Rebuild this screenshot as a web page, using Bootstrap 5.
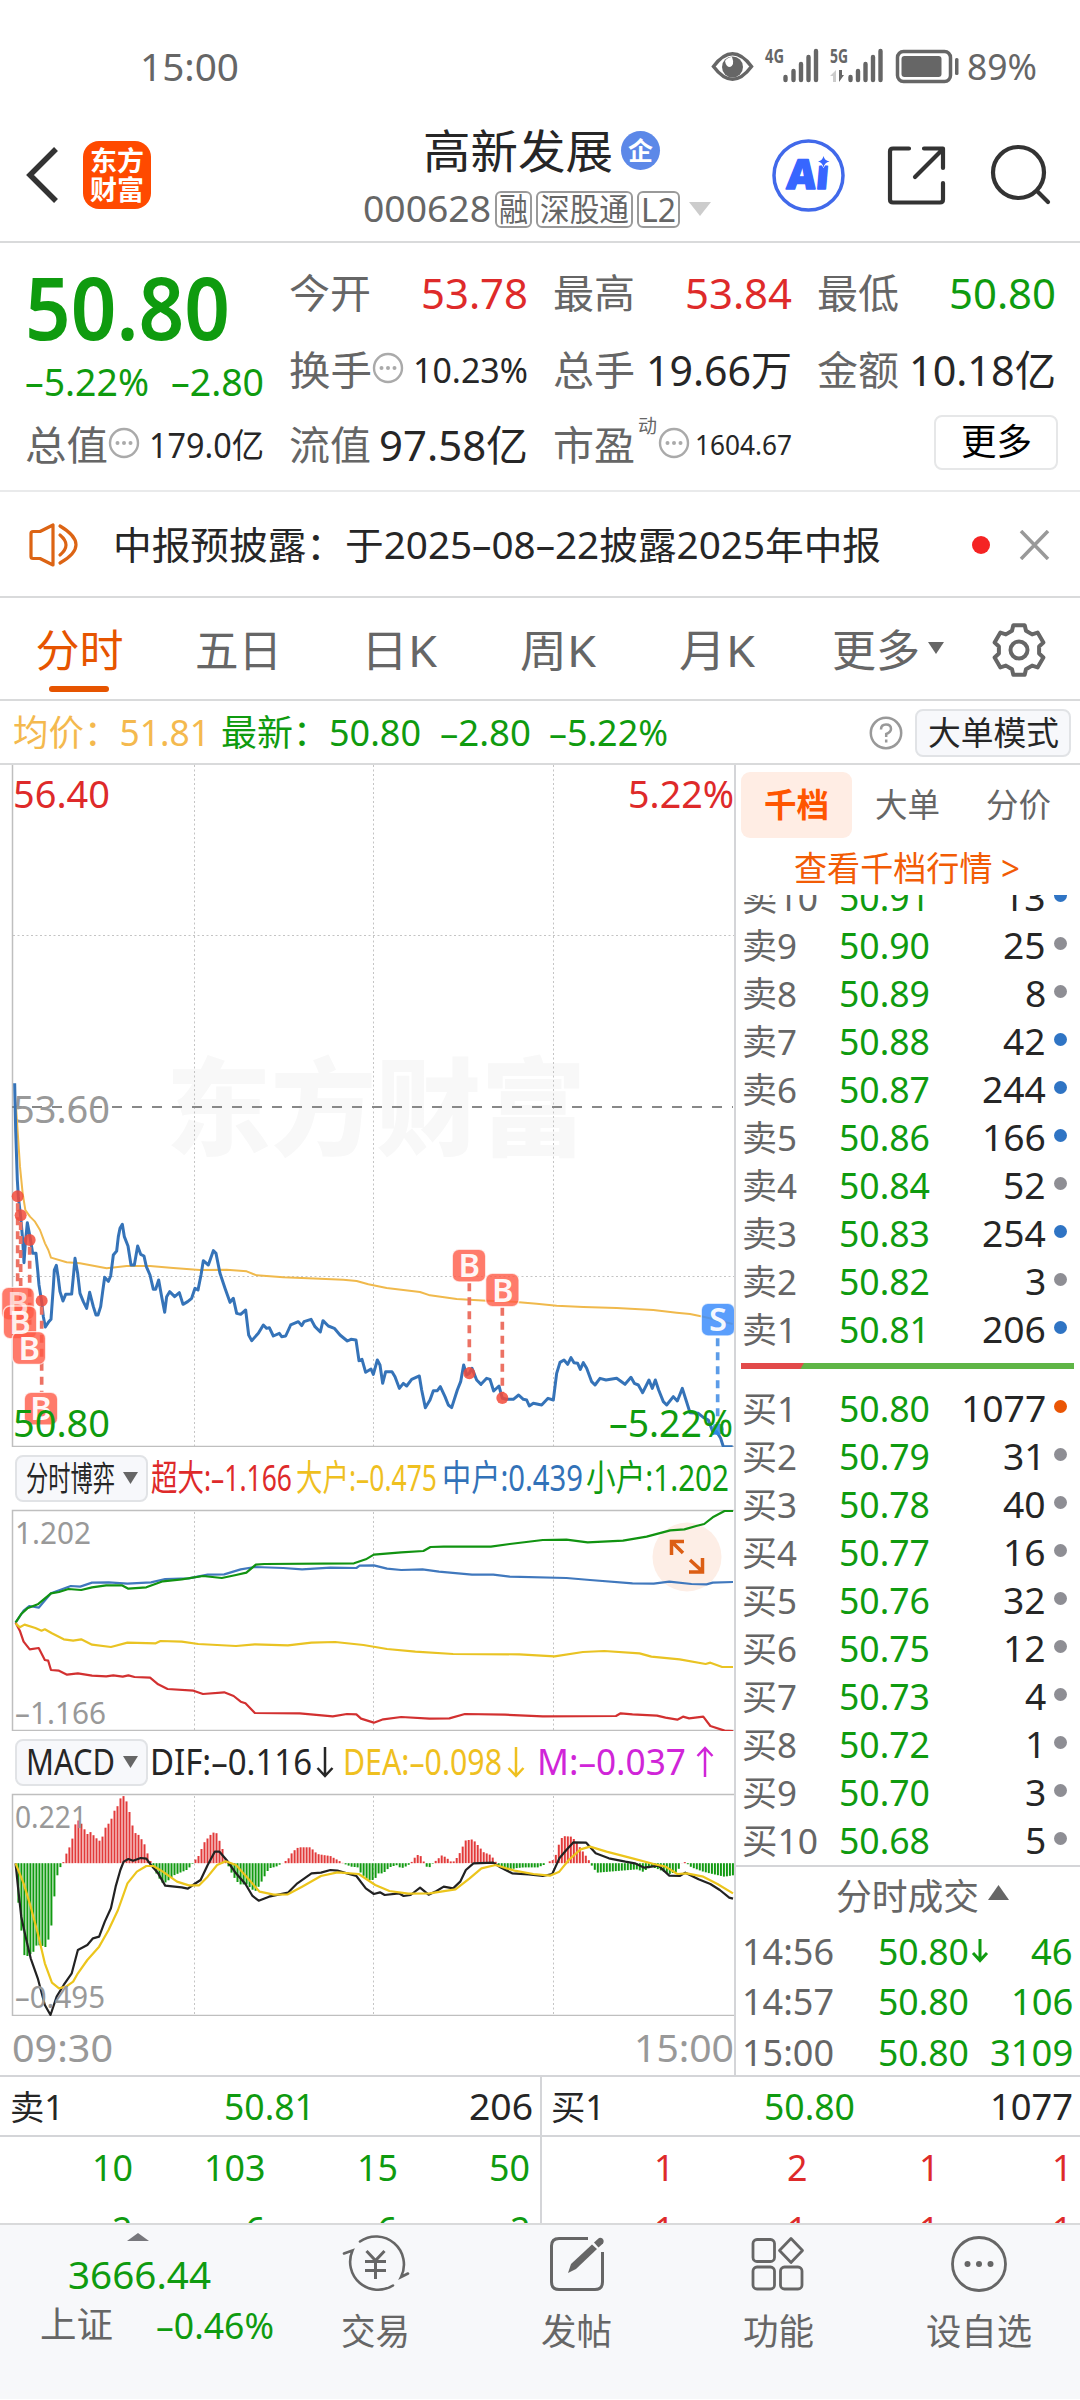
<!DOCTYPE html>
<html lang="zh-CN">
<head>
<meta charset="utf-8">
<meta name="viewport" content="width=device-width, initial-scale=1">
<title>高新发展 000628</title>
<link rel="stylesheet" href="https://cdn.jsdelivr.net/npm/bootstrap@5.3.0/dist/css/bootstrap.min.css">
<style>
body{width:1080px;height:2400px;overflow:hidden;background:#fff;color:#262626;font-family:"Noto Sans","Noto Sans CJK SC",sans-serif;line-height:1.2}
svg{display:block;flex:none}
svg text{font-family:"Noto Sans","Noto Sans CJK SC",sans-serif}
.fit{display:inline-block;white-space:nowrap;flex:none}
.fit>span{display:inline-block;transform-origin:0 50%}
.colon{font-family:"Noto Sans CJK TC",sans-serif;line-height:1}
.c-g{color:#0f9b0f}.c-r{color:#de2a2a}.c-y{color:#efc01f}.c-b{color:#3272b8}.c-m{color:#d025d8}
.c-gray{color:#666}.c-avg{color:#f4b94e}.c-o{color:#f25c05}
.f28{font-size:28px}.f33{font-size:33px}.f34{font-size:34px}.f36{font-size:36px}.f38{font-size:38px}.f40{font-size:40px}.f42{font-size:42px}.f44{font-size:44px}
.status{height:105px;padding:28px 43px 0 140px}
.topbar{height:138px;border-bottom:2px solid #d9dadb;padding:4px 29px 0 25px}
.logo{width:68px;height:68px;border-radius:16px;background:#ff4a00;color:#fff;font-size:27px;font-weight:700;line-height:29px;text-align:center;margin-left:25px}
.stockname{font-size:46px;line-height:60px;height:60px}
.qi{width:39px;height:39px;border-radius:50%;background:#5c88e8;color:#fff;font-size:25px;font-weight:700;line-height:38px;text-align:center}
.tagbox{height:37px;border:2px solid #999;border-radius:6px;line-height:1;padding:0 2px}
.quote{height:249px;border-bottom:2px solid #e9eaeb;padding:11px 24px 0 25px}
.qcol{width:239px}
.q1{height:78px}.q2{height:76px}.q3{height:74px}
.bigprice{height:108px;font-size:86px;font-weight:600;line-height:106px}
.chg{height:46px;padding-bottom:6px}
.morebtn{width:124px;height:55px;border:2px solid #e6e7e8;border-radius:8px;background:#fff;margin:-6px -2px 0 0}
.notice{height:106px;border-bottom:2px solid #d9dadb;padding:2px 30px 0 29px}
.reddot{width:18px;height:18px;border-radius:50%;background:#f52323}
.tabs{height:103px;border-bottom:2px solid #d9dadb}
.tab{width:159px;height:101px;position:relative;padding-top:3px}
.tab.on{color:#e65400}
.tab.on::after{content:"";position:absolute;left:49px;bottom:7px;width:60px;height:6px;border-radius:3px;background:#e65400}
.info{height:64px;border-bottom:2px solid #d9dadb;padding:2px 9px 0 13px}
.chip{background:#f7f8fb;border:2px solid #e1e3e6;border-radius:8px;flex:none}
.leftcol{width:736px;border-right:2px solid #d4d5d8;height:1310px}
.rightcol{width:344px;height:1310px}
.indrow{height:62px;padding-left:15px}
.indrow .chip{width:133px;height:47px;padding-left:9px}
.dtabs{height:76px;padding:7px 0 3px 5px}
.dtab{width:111px;height:66px;border-radius:9px}
.dtab.on{background:#ffede4;color:#ff5500;font-weight:700}
.clipbox{height:459px;overflow:hidden}
.clipbox>div{margin-top:-21px}
.lv{height:48px;padding:0 13px 0 6px;font-size:36px}
.lv .lab{width:97px;color:#666;font-size:35px}
.lv .dotc{width:13px;height:13px;border-radius:50%;margin:-6px 0 0 8px}
.balance{height:6px;width:333px;margin:9px 5px 16px;background:linear-gradient(120deg,#e24a4a 54px,#5fb546 55px)}
.dealhead{height:61px;border-top:2px solid #d4d5d8}
.deal{height:50.5px;padding:0 7px 0 6px;font-size:36px}
.bottomgrid{border-top:2px solid #d4d5d8;height:148px;overflow:hidden}
.half{width:540px}
.half+.half{border-left:2px solid #d4d5d8}
.hrow{height:60px;border-bottom:2px solid #d4d5d8;font-size:36px;padding-top:2px}
.hrow>span+span{margin-left:auto}
.drow{height:62px;font-size:36px}
.drow>div{width:132.5px;text-align:right}
.dock{height:176px;background:#f7f8fa;border-top:2px solid #d9dadb}
.dock .item{width:201.5px;padding-top:9px}
</style>
</head>
<body>
<!-- system status bar -->
<header class="status d-flex align-items-center c-gray">
  <div class="d-flex align-items-center w-100" style="margin-top:-28px;padding-top:28px">
    <span class="fit f38" data-w="99">15:00</span>
    <svg class="ms-auto" width="262" height="40" viewBox="707 46 262 40" style="margin-right:-3px">
      <g fill="none" stroke="#666" stroke-width="3.5">
        <path d="M712.500 65.500Q731.500 40 750.500 65.500Q731.500 91 712.500 65.500Z"/>
        <rect x="896.500" y="50.500" width="53" height="30" rx="6"/>
      </g>
      <circle cx="731.500" cy="66" r="10.500" fill="#666"/><path d="M731 56Q734 64 729 66Q725 66 724 60Q727 56 731 56Z" fill="#fff"/>
      <text x="764" y="62" font-size="19" font-weight="700" fill="#666" textLength="19" lengthAdjust="spacingAndGlyphs">4G</text>
      <text x="829" y="62" font-size="19" font-weight="700" fill="#666" textLength="18" lengthAdjust="spacingAndGlyphs">5G</text>
      <g stroke="#666" stroke-width="4.400" stroke-linecap="round">
        <path d="M784.500 76V79M792.500 70V79M800 63V79M807.500 56V79M815 50V79"/>
        <path d="M849.500 76V79M857 70V79M864.500 63V79M872 56V79M879.500 50V79"/>
      </g>
      <path d="M829 75L835 69V81H832V75Z" fill="#ccc"/><path d="M838 69H841V74H843L838 81Z" fill="#666"/>
      <rect x="900.500" y="55" width="40" height="21" rx="3" fill="#666"/><rect x="954" y="57" width="3.500" height="17" rx="1.500" fill="#666"/>
    </svg>
    <span class="fit" style="font-size:37px" data-w="70">89%</span>
  </div>
</header>

<!-- title bar -->
<div class="topbar d-flex align-items-center">
  <svg width="33" height="58" viewBox="0 0 33 58"><path d="M31 3L5 29L31 55" fill="none" stroke="#333" stroke-width="5.500" stroke-linejoin="miter"/></svg>
  <div class="logo d-flex flex-column justify-content-center"><div>东方</div><div>财富</div></div>
  <div class="d-flex flex-column" style="width:360px;margin-left:212px;padding-top:8px">
    <div class="stockname d-flex align-items-center" style="padding-left:60px"><span class="fit" data-w="190">高新发展</span><span class="qi ms-2">企</span></div>
    <div class="d-flex align-items-center c-gray" style="height:58px">
      <span class="fit" style="font-size:36px" data-w="128">000628</span>
      <span class="tagbox ms-1 d-flex align-items-center"><span class="fit" style="font-size:32px" data-w="29">融</span></span>
      <span class="tagbox ms-1 d-flex align-items-center"><span class="fit" style="font-size:32px" data-w="89">深股通</span></span>
      <span class="tagbox ms-1 d-flex align-items-center"><span class="fit" style="font-size:33px" data-w="35">L2</span></span>
      <svg class="ms-2" width="24" height="16" viewBox="0 0 24 16"><path d="M1 1H23L12 15Z" fill="#ccc"/></svg>
    </div>
  </div>
  <svg class="ms-auto" width="279" height="76" viewBox="772 137 279 76">
    <circle cx="808.500" cy="175.500" r="34.500" fill="none" stroke="#4169ea" stroke-width="3.500"/>
    <text x="0" y="0" transform="translate(786 188.500) skewX(-5)" font-size="41" font-weight="900" fill="#3766ff" stroke="#3766ff" stroke-width="1.500" stroke-linejoin="round" textLength="42" lengthAdjust="spacingAndGlyphs">Aı</text>
    <path d="M823.500 156Q824.500 160.500 829.500 161.500Q824.500 162.500 823.500 167.500Q822.500 162.500 818 161.500Q822.500 160.500 823.500 156Z" fill="#3766ff" stroke="#fff" stroke-width="1" paint-order="stroke"/>
    <g fill="none" stroke="#333" stroke-width="4.200" stroke-linecap="round" stroke-linejoin="round">
      <path d="M909 148.500H893Q890 148.500 890 151.500V199.500Q890 202.500 893 202.500H940Q943 202.500 943 199.500V183"/>
      <path d="M924 148.500H943V168M915 177L942 150"/>
      <circle cx="1018.500" cy="172.500" r="25.500"/><path d="M1037 191L1048 202"/>
    </g>
  </svg>
</div>

<!-- quote summary -->
<section class="quote d-flex justify-content-between">
  <div class="qcol">
    <div class="bigprice c-g"><span class="fit" data-w="205">50.80</span></div>
    <div class="chg d-flex align-items-center justify-content-between c-g" style="font-size:38px"><span class="fit" data-w="124">–5.22%</span><span class="fit" data-w="93">–2.80</span></div>
    <div class="q3 d-flex align-items-center"><span class="fit f40 c-gray" data-w="83">总值</span><svg width="32" height="32" viewBox="0 0 32 32" style="margin-top:-5px"><use href="#dots"/></svg><span class="fit f34 ms-auto" data-w="115">179.0亿</span></div>
  </div>
  <div class="qcol">
    <div class="q1 d-flex align-items-center justify-content-between"><span class="fit f40 c-gray" data-w="82">今开</span><span class="fit f42 c-r" data-w="107">53.78</span></div>
    <div class="q2 d-flex align-items-center"><span class="fit f40 c-gray" data-w="83">换手</span><svg width="32" height="32" viewBox="0 0 32 32" style="margin-top:-5px"><use href="#dots"/></svg><span class="fit f34 ms-auto" data-w="115">10.23%</span></div>
    <div class="q3 d-flex align-items-center justify-content-between"><span class="fit f40 c-gray" data-w="82">流值</span><span class="fit f42" data-w="149">97.58亿</span></div>
  </div>
  <div class="qcol">
    <div class="q1 d-flex align-items-center justify-content-between"><span class="fit f40 c-gray" data-w="82">最高</span><span class="fit f42 c-r" data-w="107">53.84</span></div>
    <div class="q2 d-flex align-items-center justify-content-between"><span class="fit f40 c-gray" data-w="82">总手</span><span class="fit f42" data-w="146">19.66万</span></div>
    <div class="q3 d-flex align-items-center"><span class="fit f40 c-gray" data-w="82">市盈</span><span class="fit c-gray" style="font-size:19px;margin:-38px 0 0 3px" data-w="19">动</span><svg width="32" height="32" viewBox="0 0 32 32" style="margin:-5px 0 0 1px"><use href="#dots"/></svg><span class="fit ms-auto f28" data-w="97">1604.67</span></div>
  </div>
  <div class="qcol">
    <div class="q1 d-flex align-items-center justify-content-between"><span class="fit f40 c-gray" data-w="82">最低</span><span class="fit f42 c-g" data-w="107">50.80</span></div>
    <div class="q2 d-flex align-items-center justify-content-between"><span class="fit f40 c-gray" data-w="82">金额</span><span class="fit f42" data-w="147">10.18亿</span></div>
    <div class="q3 d-flex align-items-center justify-content-end"><button class="morebtn p-0 d-flex align-items-center justify-content-center"><span class="fit f36" data-w="71">更多</span></button></div>
  </div>
</section>

<!-- announcement -->
<section class="notice d-flex align-items-center">
  <svg width="53" height="46" viewBox="29 522 53 46"><g fill="none" stroke="#dc6414" stroke-width="3.200" stroke-linejoin="round" stroke-linecap="round"><path d="M31 533.500Q31 531.500 33 531.500H40L53 525V565L40 558.500H33Q31 558.500 31 556.500Z"/><path d="M60 535Q72 545 60 555M60 526Q92 545 60 563"/></g></svg>
  <span class="fit" style="font-size:38px;margin-left:31px" data-w="768">中报预披露<span class="colon">：</span>于2025–08–22披露2025年中报</span>
  <span class="reddot ms-auto"></span>
  <svg style="margin-left:29px" width="31" height="30" viewBox="0 0 31 30"><path d="M2 1L29 29M29 1L2 29" stroke="#999" stroke-width="3.500"/></svg>
</section>

<!-- period tabs -->
<nav class="tabs d-flex align-items-center f44 c-gray">
  <div class="tab on d-flex align-items-center justify-content-center"><span class="fit" data-w="88">分时</span></div>
  <div class="tab d-flex align-items-center justify-content-center"><span class="fit" data-w="87">五日</span></div>
  <div class="tab d-flex align-items-center justify-content-center" style="padding-left:3px"><span class="fit" data-w="76">日K</span></div>
  <div class="tab d-flex align-items-center justify-content-center" style="padding-left:2px"><span class="fit" data-w="76">周K</span></div>
  <div class="tab d-flex align-items-center justify-content-center" style="padding-left:3px"><span class="fit" data-w="76">月K</span></div>
  <div class="tab d-flex align-items-center" style="padding-left:37px"><span class="fit" data-w="88">更多</span><svg class="ms-2" width="16" height="12" viewBox="0 0 16 12" style="margin-top:-5px"><path d="M0 0H16L8 12Z" fill="#666"/></svg></div>
  <svg width="56" height="56" viewBox="0 0 56 56" style="margin-left:37px;margin-top:2px"><g fill="none" stroke="#666" stroke-width="4" stroke-linejoin="round"><path d="M22.300 3.200H33.700L35 8.800L41.100 12.400L46.600 10.600L52.400 20.500L48.100 24.500V31.500L52.400 35.500L46.600 45.400L41.100 43.600L35 47.200L33.700 52.800H22.300L21 47.200L14.900 43.600L9.400 45.400L3.600 35.500L7.900 31.500V24.500L3.600 20.500L9.400 10.600L14.900 12.400L21 8.800Z"/><circle cx="28" cy="28" r="8.500"/></g></svg>
</nav>

<div class="info d-flex align-items-center f36">
  <span class="fit c-avg" data-w="197">均价<span class="colon">：</span>51.81</span>
  <span class="fit c-g" style="margin-left:11px" data-w="200">最新<span class="colon">：</span>50.80</span>
  <span class="fit c-g" style="margin-left:19px" data-w="91">–2.80</span>
  <span class="fit c-g" style="margin-left:18px" data-w="119">–5.22%</span>
  <svg class="ms-auto" width="34" height="34" viewBox="0 0 34 34"><circle cx="17" cy="17" r="15.200" fill="none" stroke="#999" stroke-width="2.500"/><path d="M12 13.500Q12 8.500 17 8.500Q22 8.500 22 13Q22 16 17.200 18V21M17.200 23.500V26.500" fill="none" stroke="#999" stroke-width="2.500"/></svg>
  <div class="chip d-flex align-items-center justify-content-center" style="width:156px;height:48px;margin-left:12px"><span class="fit f33" data-w="131">大单模式</span></div>
</div>

<main class="d-flex">
  <div class="leftcol">
    <!-- intraday price -->
    <svg width="734" height="682" viewBox="0 765 734 682">
      <text x="166" y="1147" font-size="106" font-weight="900" fill="#f8f8f8" textLength="420" lengthAdjust="spacingAndGlyphs" style="font-family:'Noto Sans CJK SC'">东方财富</text>
      <path d="M194.500 765V1446M373.500 765V1446M553.500 765V1446M13 935.500H734M13 1276.500H734" stroke="#c4c4c4" stroke-width="1" stroke-dasharray="2 2.500" fill="none"/>
      <path d="M12.500 765V1446.500H734" fill="none" stroke="#bfbfbf" stroke-width="1.500"/>
      <path d="M12 1107H733" stroke="#888" stroke-width="2" stroke-dasharray="10 10"/>
      <text x="13" y="1122.500" fill="#999" font-size="38" textLength="97" lengthAdjust="spacingAndGlyphs">53.60</text>
      <g transform="translate(0 1040) scale(.33333)" fill="none" stroke-linejoin="round">
        <polyline stroke="#f0b94c" stroke-width="6" points="48,200 54,290 60,380 68,460 76,510 90,530 105,545 120,570 135,610 145,630 153,653 200,667 240,670 320,685 380,678 450,678 520,684 600,690 680,689 740,694 770,706 850,712 960,716 1030,719 1070,723 1105,733 1160,744 1210,750 1260,756 1290,766 1370,777 1460,782 1540,785 1610,791 1670,797 1750,801 1850,804 1960,810 2030,818 2070,822 2110,830 2150,840 2198,852"/>
        <polyline stroke="#3573b8" stroke-width="9" points="44,130 47,270 52,420 55,470 62,530 68,600 72,668 76,610 82,548 90,590 98,640 108,640 113,690 117,735 125,785 130,830 136,861 145,847 153,838 160,740 163,690 169,676 175,715 180,755 189,783 197,763 215,762 221,700 225,655 233,700 240,760 250,785 260,805 269,757 280,800 288,825 294,825 302,800 308,755 314,712 325,724 332,708 340,645 350,633 355,590 360,565 367,553 373,590 384,618 393,675 403,675 413,618 422,643 432,648 439,680 450,705 460,748 467,748 476,720 485,770 494,817 500,770 509,755 524,770 538,758 549,793 563,785 575,775 585,745 594,750 603,705 610,662 625,675 640,632 648,640 660,700 675,745 690,787 700,775 710,820 722,823 737,810 746,885 755,902 775,880 790,855 800,865 808,863 820,888 838,880 845,890 857,888 872,855 895,845 905,857 912,845 933,838 945,860 961,876 969,842 985,858 1003,865 1020,885 1042,903 1053,898 1068,900 1077,962 1086,958 1097,997 1113,987 1120,1003 1132,960 1140,975 1148,1030 1157,995 1176,995 1185,1010 1198,1045 1210,1030 1220,1038 1235,1018 1258,1008 1265,1050 1276,1103 1290,1080 1300,1052 1312,1052 1321,1040 1335,1070 1345,1095 1355,1103 1372,1050 1382,1025 1391,975 1400,1005 1408,1000 1416,985 1430,1020 1443,1033 1460,1015 1470,1018 1481,1053 1497,1038 1507,1075 1520,1078 1540,1078 1556,1065 1570,1078 1580,1080 1588,1098 1600,1090 1625,1095 1644,1075 1660,1080 1670,1000 1680,967 1692,960 1703,973 1713,953 1722,968 1733,970 1741,988 1750,968 1760,985 1775,1025 1785,1035 1800,1015 1818,1020 1850,1015 1875,1033 1893,1012 1903,1030 1915,1035 1928,1058 1947,1020 1957,1045 1966,1020 1976,1050 1990,1085 2000,1095 2020,1070 2032,1083 2047,1045 2058,1080 2070,1118 2095,1120 2110,1132 2125,1140 2140,1180 2150,1175 2162,1195 2170,1220 2198,1220"/>
        <g stroke="#ec7264" stroke-width="11" stroke-dasharray="24 18"><path d="M53 490V742M62 546V798M89 620V875M125 800V1057M1408 730V985M1507 803V1060"/><path d="M2153 895V1150" stroke="#5c9ce8"/></g>
        <g fill="#f24a3a" fill-opacity=".85"><circle cx="53" cy="469" r="18"/><circle cx="62" cy="526" r="18"/><circle cx="89" cy="600" r="18"/><circle cx="125" cy="782" r="18"/><circle cx="1408" cy="1000" r="18"/><circle cx="1507" cy="1074" r="18"/><circle cx="2153" cy="1168" r="18" fill="#2b8ae8"/></g>
        <g fill="#ff5a46" fill-opacity=".8" stroke="#fff" stroke-opacity=".7" stroke-width="4"><rect x="5" y="742" width="98" height="98" rx="20"/><rect x="10" y="798" width="100" height="98" rx="20"/><rect x="37" y="875" width="100" height="98" rx="20"/><rect x="73" y="1057" width="100" height="98" rx="20"/><rect x="1357" y="628" width="100" height="98" rx="20"/><rect x="1457" y="700" width="100" height="100" rx="20"/><rect x="2104" y="790" width="100" height="98" rx="20" fill="#3d8dfc" fill-opacity=".85"/></g>
        <g fill="#fff" fill-opacity=".95" font-size="98" font-weight="600" text-anchor="middle"><text x="54" y="826" fill-opacity=".7">B</text><text x="60" y="882" fill-opacity=".9">B</text><text x="88" y="959">B</text><text x="123" y="1141">B</text><text x="1408" y="712">B</text><text x="1508" y="785">B</text><text x="2154" y="874">S</text></g>
      </g>
      <g font-size="38">
        <text x="13" y="808" fill="#de2a2a" textLength="97" lengthAdjust="spacingAndGlyphs">56.40</text>
        <text x="628" y="808" fill="#de2a2a" textLength="106" lengthAdjust="spacingAndGlyphs">5.22%</text>
        <text x="13" y="1437" fill="#0f9b0f" textLength="97" lengthAdjust="spacingAndGlyphs">50.80</text>
        <text x="609" y="1437" fill="#0f9b0f" textLength="124" lengthAdjust="spacingAndGlyphs">–5.22%</text>
      </g>
    </svg>

    <div class="indrow d-flex align-items-center f36">
      <div class="chip d-flex align-items-center"><span class="fit f34" data-w="89">分时博弈</span><svg class="ms-2" width="15" height="12" viewBox="0 0 15 12"><path d="M0 0H15L7.500 12Z" fill="#666"/></svg></div>
      <span class="fit c-r" style="margin-left:3px" data-w="141">超大:–1.166</span>
      <span class="fit c-y" style="margin-left:4px" data-w="141">大户:–0.475</span>
      <span class="fit c-b" style="margin-left:5px" data-w="141">中户:0.439</span>
      <span class="fit c-g" style="margin-left:3px" data-w="143">小户:1.202</span>
    </div>

    <!-- order-size flow -->
    <svg width="734" height="222" viewBox="0 1509 734 222">
      <path d="M194.500 1512V1730M373.500 1512V1730M553.500 1512V1730" stroke="#c4c4c4" stroke-dasharray="2 2.500"/>
      <path d="M734 1510.500H12.500V1730.500H734" fill="none" stroke="#bfbfbf" stroke-width="1.500"/>
      <circle cx="687" cy="1557" r="34.500" fill="#fdeee6"/>
      <g transform="translate(0 1440) scale(.472 .33333)" fill="none" stroke-width="2.200" stroke-linejoin="round">
        <polyline vector-effect="non-scaling-stroke" stroke="#4078bd" points="33,548 50,512 62,498 82,503 108,460 150,438 170,440 195,428 230,427 270,431 320,427 350,417 400,415 440,404 475,403 510,388 540,381 600,384 640,388 700,383 755,384 762,377 792,376 820,386 850,390 895,388 930,395 1000,404 1045,404 1080,410 1200,414 1250,420 1340,430 1385,431 1418,425 1465,432 1497,433 1510,428 1553,426"/>
        <polyline vector-effect="non-scaling-stroke" stroke="#119311" points="33,548 45,522 58,505 80,493 108,460 125,456 145,447 172,450 195,442 225,436 258,436 272,446 310,442 345,424 385,418 430,408 470,414 500,405 522,398 542,374 560,372 750,370 775,358 792,344 850,337 897,333 912,321 940,320 1040,320 1080,312 1150,300 1200,299 1245,307 1320,302 1370,290 1420,271 1450,268 1475,258 1492,252 1512,230 1535,213 1553,213"/>
        <polyline vector-effect="non-scaling-stroke" stroke="#d23030" points="33,548 42,572 50,605 63,628 82,624 95,660 102,662 108,690 125,692 142,704 165,700 195,707 225,709 240,706 260,710 272,706 285,711 318,713 335,733 355,747 410,752 430,762 475,757 495,768 510,785 520,790 540,819 635,820 705,829 735,822 755,823 765,836 792,848 812,838 850,831 910,836 952,835 985,822 1070,824 1150,829 1305,828 1315,820 1340,823 1392,827 1410,833 1435,839 1447,830 1460,835 1490,830 1505,858 1535,872 1553,873"/>
        <polyline vector-effect="non-scaling-stroke" stroke="#e9c323" points="33,550 42,562 52,554 75,564 88,572 95,568 110,580 135,598 155,602 172,598 195,614 235,621 270,608 330,610 340,603 385,605 420,612 500,618 540,613 610,616 660,608 710,606 770,615 820,627 880,635 960,642 1100,643 1175,649 1235,636 1280,633 1355,640 1380,650 1440,658 1495,672 1505,668 1530,681 1553,681"/>
      </g>
      <path d="M671.500 1555V1541.500H684M672 1542L683 1553M702.500 1558V1572H689M702 1571L690 1560" fill="none" stroke="#dc5e14" stroke-width="3.500"/>
      <g fill="#999" font-size="30"><text x="15" y="1543.500" textLength="76" lengthAdjust="spacingAndGlyphs">1.202</text><text x="15" y="1723.500" textLength="91" lengthAdjust="spacingAndGlyphs">–1.166</text></g>
    </svg>

    <div class="indrow d-flex align-items-center f36">
      <div class="chip d-flex align-items-center"><span class="fit f36" data-w="89">MACD</span><svg class="ms-2" width="15" height="12" viewBox="0 0 15 12"><path d="M0 0H15L7.500 12Z" fill="#666"/></svg></div>
      <span class="fit" style="margin-left:2px" data-w="162">DIF:–0.116</span>
      <svg style="margin-left:4px" width="18" height="32" viewBox="0 0 18 32"><path d="M9 1V30M1.500 22L9 30L16.500 22" fill="none" stroke="#262626" stroke-width="2.500"/></svg>
      <span class="fit c-y" style="margin-left:9px" data-w="159">DEA:–0.098</span>
      <svg style="margin-left:5px" width="18" height="32" viewBox="0 0 18 32"><path d="M9 1V30M1.500 22L9 30L16.500 22" fill="none" stroke="#efc01f" stroke-width="2.500"/></svg>
      <span class="fit c-m" style="margin-left:12px" data-w="149">M:–0.037</span>
      <svg style="margin-left:10px" width="18" height="32" viewBox="0 0 18 32"><path d="M9 31V2M1.500 10L9 2L16.500 10" fill="none" stroke="#d025d8" stroke-width="2.500"/></svg>
    </div>

    <!-- MACD -->
    <svg width="734" height="223" viewBox="0 1793 734 223">
      <path d="M194.500 1796V2015M373.500 1796V2015M553.500 1796V2015" stroke="#c4c4c4" stroke-dasharray="2 2.500"/>
      <path d="M734 1794.500H12.500V2015.500H734" fill="none" stroke="#bfbfbf" stroke-width="1.500"/>
      <g id="macdbars"></g>
      <g fill="#999" font-size="30"><text x="15" y="1828" textLength="72" lengthAdjust="spacingAndGlyphs">0.221</text></g>
      <g transform="translate(0 1730) scale(.472 .33333)" fill="none" stroke-width="2.200" stroke-linejoin="round">
        <polyline vector-effect="non-scaling-stroke" stroke="#222" points="33,400 38,470 45,560 55,625 65,685 80,745 95,825 107,855 120,800 135,765 152,730 165,660 185,645 197,625 210,620 222,575 235,535 245,470 255,420 262,395 272,387 282,392 298,384 310,386 320,405 335,430 350,467 385,472 398,476 412,462 425,450 440,405 455,365 465,365 480,390 500,430 520,462 535,498 548,512 570,500 610,488 630,460 660,430 680,428 700,420 715,422 735,430 755,438 775,475 792,492 805,487 815,495 845,490 855,498 870,495 890,473 908,494 925,483 940,470 960,475 975,455 987,420 1003,400 1045,398 1060,412 1085,430 1120,433 1150,438 1170,432 1185,385 1200,360 1215,337 1242,338 1262,370 1290,385 1325,395 1345,400 1365,413 1395,407 1418,437 1440,438 1452,428 1480,448 1505,462 1525,480 1545,503 1553,506"/>
        <polyline vector-effect="non-scaling-stroke" stroke="#ecc51c" points="33,400 50,460 65,530 80,610 95,700 110,758 125,775 140,770 155,755 165,730 185,690 210,650 230,600 250,540 270,460 290,425 310,408 325,408 345,425 375,455 400,466 422,466 440,440 460,405 478,394 500,405 525,445 550,485 580,494 610,493 640,470 680,438 715,427 760,432 795,465 825,483 865,491 910,490 965,478 995,445 1020,415 1050,405 1090,422 1130,432 1165,437 1185,425 1205,390 1230,358 1250,350 1285,365 1340,385 1385,402 1410,410 1435,432 1455,430 1490,440 1520,462 1553,490"/>
      </g>
      <text x="15" y="2007.500" fill="#999" font-size="30" textLength="90" lengthAdjust="spacingAndGlyphs">–0.495</text>
    </svg>
    <div class="d-flex justify-content-between align-items-center" style="height:59px;color:#999;font-size:38px;padding:4px 0 0 12px"><span class="fit" data-w="101">09:30</span><span class="fit" data-w="100">15:00</span></div>
  </div>

  <!-- order book -->
  <div class="rightcol">
    <div class="dtabs d-flex c-gray f33">
      <div class="dtab on d-flex align-items-center justify-content-center"><span class="fit" data-w="65">千档</span></div>
      <div class="dtab d-flex align-items-center justify-content-center"><span class="fit" data-w="65">大单</span></div>
      <div class="dtab d-flex align-items-center justify-content-center"><span class="fit" data-w="65">分价</span></div>
    </div>
    <div class="d-flex align-items-center c-o f34" style="height:54px;padding-left:58px"><span class="fit" data-w="226">查看千档行情 &gt;</span></div>
    <div class="clipbox"><div id="asks"></div></div>
    <div class="balance"></div>
    <div id="bids"></div>
    <div class="dealhead d-flex align-items-center c-gray f36" style="padding-left:100px"><span class="fit" data-w="143">分时成交</span><svg width="21" height="15" viewBox="0 0 21 15" style="margin:-9px 0 0 9px"><path d="M10.500 0L21 15H0Z" fill="#666"/></svg></div>
    <div id="deals"></div>
  </div>
</main>

<!-- level-2 queue -->
<section class="bottomgrid d-flex">
  <div class="half">
    <div class="hrow d-flex align-items-center" style="padding-left:10px;padding-right:7px"><span class="fit f34" data-w="54">卖1</span><span class="fit c-g" style="margin-left:160px" data-w="91">50.81</span><span class="fit" data-w="64">206</span></div>
    <div class="queue c-g" data-rows="10,103,15,50;2,6,6,2"></div>
  </div>
  <div class="half">
    <div class="hrow d-flex align-items-center" style="padding-left:9px;padding-right:7px"><span class="fit f34" data-w="54">买1</span><span class="fit c-g" style="margin-left:159px" data-w="91">50.80</span><span class="fit" data-w="83">1077</span></div>
    <div class="queue c-r" data-rows="1,2,1,1;1,1,1,1"></div>
  </div>
</section>

<!-- dock -->
<footer class="dock d-flex c-gray">
  <div style="width:275px;padding-top:8px">
    <svg width="22" height="8" viewBox="0 0 22 8" style="margin-left:127px"><path d="M0 8L11 0L22 8Z" fill="#77777c"/></svg>
    <div class="c-g" style="height:67px;padding:10px 0 0 68px"><span class="fit" style="font-size:39px" data-w="143">3666.44</span></div>
    <div class="d-flex align-items-center" style="height:34px;padding-left:40px"><span class="fit f36" data-w="73">上证</span><span class="fit c-g" style="font-size:37px;margin-left:43px" data-w="118">–0.46%</span></div>
  </div>
  <div class="item d-flex flex-column align-items-center">
    <svg width="70" height="60" viewBox="340 2234 70 60"><g fill="none" stroke="#666" stroke-width="2.600" stroke-linecap="round"><path d="M360 2241.500A28 28 0 0 1 401 2277L408 2273.500M344 2253.500L352.500 2250.500A28 28 0 0 0 393 2285.500"/><path d="M366.500 2251L375.500 2260.500L384.500 2251M375.500 2260V2279M365 2261.500H386M365 2270.500H386" stroke-width="3" stroke-linecap="butt"/></g></svg>
    <span class="fit f36 mt-3" data-w="69">交易</span>
  </div>
  <div class="item d-flex flex-column align-items-center">
    <svg width="58" height="60" viewBox="548 2234 58 60"><g fill="none" stroke="#666" stroke-width="3"><path d="M588 2238.500H559Q551.500 2238.500 551.500 2246V2282Q551.500 2289.500 559 2289.500H595Q602.500 2289.500 602.500 2282V2252"/></g><path d="M568 2273L571 2264L592 2244.500L597 2249L576 2269Z" fill="#666"/><path d="M594 2242.500L599 2238Q602 2237 603.500 2240Q604 2242.500 603 2243.500L598.500 2247.500Z" fill="#666"/></svg>
    <span class="fit f36 mt-3" data-w="71">发帖</span>
  </div>
  <div class="item d-flex flex-column align-items-center">
    <svg width="56" height="60" viewBox="751 2234 56 60"><g fill="none" stroke="#666" stroke-width="2.800" stroke-linejoin="round"><rect x="754" y="2239.500" width="21.500" height="22" rx="4"/><rect x="754" y="2267" width="21.500" height="22" rx="4"/><rect x="781.500" y="2267" width="21.500" height="22" rx="4"/><path d="M792 2238.500L803.500 2250.500L792 2262.500L780.500 2250.500Z"/></g></svg>
    <span class="fit f36 mt-3" data-w="71">功能</span>
  </div>
  <div class="item d-flex flex-column align-items-center">
    <svg width="60" height="60" viewBox="949 2234 60 60"><circle cx="979" cy="2264" r="26.500" fill="none" stroke="#666" stroke-width="2.800"/><g fill="#666"><circle cx="967.500" cy="2264" r="3"/><circle cx="979" cy="2264" r="3"/><circle cx="990.500" cy="2264" r="3"/></g></svg>
    <span class="fit f36 mt-3" data-w="106">设自选</span>
  </div>
</footer>

<svg width="0" height="0" class="position-absolute"><defs><g id="dots"><circle cx="16" cy="16" r="14" fill="none" stroke="#aaa" stroke-width="2.400"/><g fill="#aaa"><circle cx="9.500" cy="16" r="2"/><circle cx="16" cy="16" r="2"/><circle cx="22.500" cy="16" r="2"/></g></g></defs></svg>

<script src="https://cdn.jsdelivr.net/npm/bootstrap@5.3.0/dist/js/bootstrap.bundle.min.js"></script>
<script>
const fit=(t,w,c='')=>`<span class="fit ${c}" data-w="${w}">${t}</span>`;
const dot={b:'#2f74c4',g:'#8e8e94',o:'#ea5504'};
const level=(side,list)=>list.map(([n,p,v,d])=>`<div class="lv d-flex align-items-center"><div class="lab">${fit(side+n,34+21*String(n).length)}</div>${fit(p,91,'c-g')}<span class="ms-auto"></span>${fit(v,String(v).length*21.3)}<span class="dotc" style="background:${dot[d]}"></span></div>`).join('');
asks.innerHTML=level('卖',[[10,'50.91',13,'b'],[9,'50.90',25,'g'],[8,'50.89',8,'g'],[7,'50.88',42,'b'],[6,'50.87',244,'b'],[5,'50.86',166,'b'],[4,'50.84',52,'g'],[3,'50.83',254,'b'],[2,'50.82',3,'g'],[1,'50.81',206,'b']]);
bids.innerHTML=level('买',[[1,'50.80',1077,'o'],[2,'50.79',31,'g'],[3,'50.78',40,'g'],[4,'50.77',16,'g'],[5,'50.76',32,'g'],[6,'50.75',12,'g'],[7,'50.73',4,'g'],[8,'50.72',1,'g'],[9,'50.70',3,'g'],[10,'50.68',5,'g']]);
deals.innerHTML=[['14:56',46,1],['14:57',106,0],['15:00',3109,0]].map(([t,v,a])=>`<div class="deal d-flex align-items-center">${fit(t,92,'c-gray')}<span style="width:44px"></span>${fit('50.80',91,'c-g')}${a?'<svg width="18" height="24" viewBox="0 0 18 24" style="margin-left:2px"><path d="M9 0V21M2 14L9 21.500L16 14" fill="none" stroke="#0f9b0f" stroke-width="3"/></svg>':''}<span class="ms-auto"></span>${fit(v,String(v).length*20.8,'c-g')}</div>`).join('');
document.querySelectorAll('.queue').forEach(q=>q.innerHTML=q.dataset.rows.split(';').map(r=>`<div class="drow d-flex align-items-center">${r.split(',').map(n=>`<div style="padding-right:${n.length==1?0:0}px">${fit(n,n.length*20.5)}</div>`).join('')}</div>`).join(''));

// MACD histogram: outline sampled once per bar, zero line at 399.500
const env='33,400 38,505 45,597 51,675 58,678 70,668 76,647 88,645 95,655 102,632 108,600 114,515 120,443 127,413 133,402 140,373 152,338 158,288 165,270 171,277 178,295 184,314 190,304 197,314 210,333 216,325 222,296 235,271 241,245 248,232 254,208 260,195 267,210 273,237 279,278 285,308 292,312 305,338 311,365 318,390 324,412 343,458 352,457 370,435 395,420 405,408 412,392 420,380 433,337 440,325 450,308 458,307 470,350 478,388 486,415 495,440 507,463 522,463 540,485 548,470 560,440 570,415 585,410 600,398 610,388 620,365 632,352 658,352 672,372 685,375 700,378 718,392 730,402 745,410 758,412 765,430 780,450 793,450 802,430 812,430 825,412 840,405 850,415 862,408 870,400 880,380 887,373 895,383 900,405 908,415 916,402 925,390 937,375 950,388 958,398 965,390 977,362 985,332 1002,328 1015,350 1025,367 1040,375 1050,395 1060,412 1075,425 1090,415 1110,412 1140,412 1155,403 1163,395 1175,388 1182,350 1192,318 1212,320 1225,345 1240,375 1248,392 1255,410 1265,428 1290,425 1350,418 1362,425 1380,410 1395,418 1418,432 1435,425 1445,398 1452,396 1465,412 1490,425 1510,432 1535,440 1556,435'.split(' ').map(s=>s.split(',').map(Number));
let bars='';
for(let x=39,k=0;x<1555;x+=6.36){
  while(k<env.length-2&&env[k+1][0]<x)k++;
  const [a,b]=env[k],[c,d]=env[k+1],v=b+(d-b)*(x-a)/(c-a),z=399.5;
  bars+=`<rect x="${(x*.472-1).toFixed(1)}" y="${(1730+Math.min(v,z)/3).toFixed(1)}" width="2" height="${(Math.abs(v-z)/3).toFixed(1)}" fill="${v<z?'#e23a3a':'#119a11'}"/>`;
}
macdbars.innerHTML=bars;

// labels shrink or stretch to their slot width
document.querySelectorAll('.fit').forEach(el=>{
  const w=+el.dataset.w;
  el.innerHTML=`<span>${el.innerHTML}</span>`;
  const s=el.firstChild, n=s.getBoundingClientRect().width;
  el.style.width=w+'px';
  s.style.transform=`scaleX(${w/n})`;
});
</script>
</body>
</html>
